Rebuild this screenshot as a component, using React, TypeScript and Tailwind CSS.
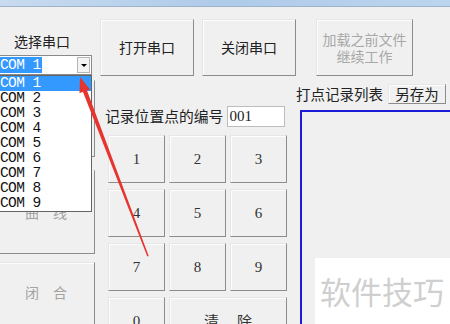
import React from 'react'

const cjk = "font-['Noto_Sans_CJK_SC',sans-serif]"
const serif = "font-['Liberation_Serif','Noto_Sans_CJK_SC',serif]"
const mono = "font-['Liberation_Mono',monospace]"

const btn =
  'flex items-center justify-center bg-[#f0f0f0] border border-t-[#e6e6e6] border-l-[#e6e6e6] border-r-[#8c8c8c] border-b-[#8c8c8c] shadow-[inset_1px_1px_0_#fdfdfd]'

const ports = ['COM 1', 'COM 2', 'COM 3', 'COM 4', 'COM 5', 'COM 6', 'COM 7', 'COM 8', 'COM 9']

function Key({ label, wide }: { label: string; wide?: boolean }) {
  return (
    <div className={`${btn} h-[48px] ${wide ? 'col-span-2' : ''}`}>
      <span className={`${wide ? cjk : serif} text-[15px] text-[#333] ${wide ? 'tracking-[18px] pl-[18px]' : ''}`}>{label}</span>
    </div>
  )
}

export default function App() {
  return (
    <div className={`relative w-[450px] h-[324px] overflow-hidden bg-[#f0f0f0] ${cjk}`}>
      {/* title bar edge */}
      <div className="h-[7px] bg-gradient-to-r from-[#c8dbef] via-[#aecbea] to-[#bcd5ee] border-b border-[#9fb3c8]" />

      <div className="flex">
        {/* left column */}
        <div className="w-[96px] shrink-0">
          <div className="mt-[24px] h-[20px] w-[84px] text-center text-[14px] leading-[20px] text-[#222]">选择串口</div>
          <div className="mt-[4px] ml-[-1px] flex h-[20px] w-[93px] items-center border border-[#8a8a8a] bg-white">
            <span className={`${mono} bg-[#3399ff] pr-[1px] text-[14.5px] tracking-[-0.6px] leading-[16px] text-white`}>COM 1</span>
            <div className="ml-auto mr-[1px] flex h-[16px] w-[13px] items-center justify-center border border-[#b5b5b5] bg-[#f4f4f4]">
              <div className="h-0 w-0 border-x-[3px] border-t-[3px] border-x-transparent border-t-black" />
            </div>
          </div>
          <div className={`${btn} ml-[-3px] mt-[5px] h-[77px] w-[98px]`} />
          <div className={`${btn} ml-[-3px] mt-[13px] h-[84px] w-[98px]`}>
            <span className="text-[14px] tracking-[14px] pl-[14px] text-[#a3a3a3]">曲线</span>
          </div>
          <div className={`${btn} ml-[-3px] mt-[8px] h-[80px] w-[98px] pb-[20px]`}>
            <span className="text-[14px] tracking-[14px] pl-[14px] text-[#a3a3a3]">闭合</span>
          </div>
        </div>

        {/* middle column */}
        <div className="ml-[4px] w-[196px] shrink-0">
          <div className="mt-[12px] flex gap-[8px]">
            <div className={`${btn} h-[57px] w-[95px]`}>
              <span className="text-[14px] text-[#222]">打开串口</span>
            </div>
            <div className={`${btn} h-[57px] w-[95px]`}>
              <span className="text-[14px] text-[#222]">关闭串口</span>
            </div>
          </div>
          <div className="mt-[30px] flex h-[21px] items-center pl-[5px]">
            <span className="text-[14.8px] text-[#222]">记录位置点的编号</span>
            <div className={`${serif} ml-[4px] flex h-[21px] w-[58px] items-center border border-[#bdbdbd] bg-white pl-[1px] text-[15px] text-[#222]`}>
              001
            </div>
          </div>
          <div className="ml-[8px] mt-[8px] grid w-[179px] grid-cols-3 gap-x-[4px] gap-y-[6px]">
            {['1', '2', '3', '4', '5', '6', '7', '8', '9'].map((k) => (
              <Key key={k} label={k} />
            ))}
            <Key label="0" />
            <Key label="清除" wide />
          </div>
        </div>

        {/* right column */}
        <div className="flex-1">
          <div className={`${btn} ml-[20px] mt-[12px] h-[57px] w-[97px] flex-col`}>
            <span className="text-[14px] leading-[17px] text-[#a8a8a8]">加载之前文件</span>
            <span className="text-[14px] leading-[17px] text-[#a8a8a8]">继续工作</span>
          </div>
          <div className="mt-[8px] flex h-[20px] items-center">
            <span className="text-[14.5px] text-[#222]">打点记录列表</span>
            <div className={`${btn} ml-[5px] h-[20px] w-[58px]`}>
              <span className="text-[14.5px] text-[#222]">另存为</span>
            </div>
          </div>
          <div className="ml-[4px] mt-[6px] h-[220px] w-[170px] border-2 border-[#1c1cd6] bg-[#f0f0f0]" />
        </div>
      </div>

      {/* open dropdown list */}
      <div className="absolute left-[-1px] top-[75px] w-[93px] border border-[#646464] bg-white">
        {ports.map((p, i) => (
          <div
            key={p}
            className={`${mono} h-[15px] text-[14.5px] tracking-[-0.6px] leading-[15px] ${i === 0 ? 'bg-[#3399ff] text-white' : 'text-[#111]'}`}
          >
            {p}
          </div>
        ))}
      </div>

      {/* red annotation arrow */}
      <svg className="pointer-events-none absolute left-0 top-0" width="450" height="324">
        <polygon
          points="80,77 90,89.5 87,90.5 148.7,256 147.3,256.5 83,92 79.5,93"
          fill="#e8342e"
        />
      </svg>

      {/* watermark */}
      <div className="absolute left-[315px] top-[258px] flex h-[66px] w-[135px] items-center bg-white pl-[5px]">
        <span className="text-[31px] leading-[40px] text-[#cfcfcf]">软件技巧</span>
      </div>
    </div>
  )
}
